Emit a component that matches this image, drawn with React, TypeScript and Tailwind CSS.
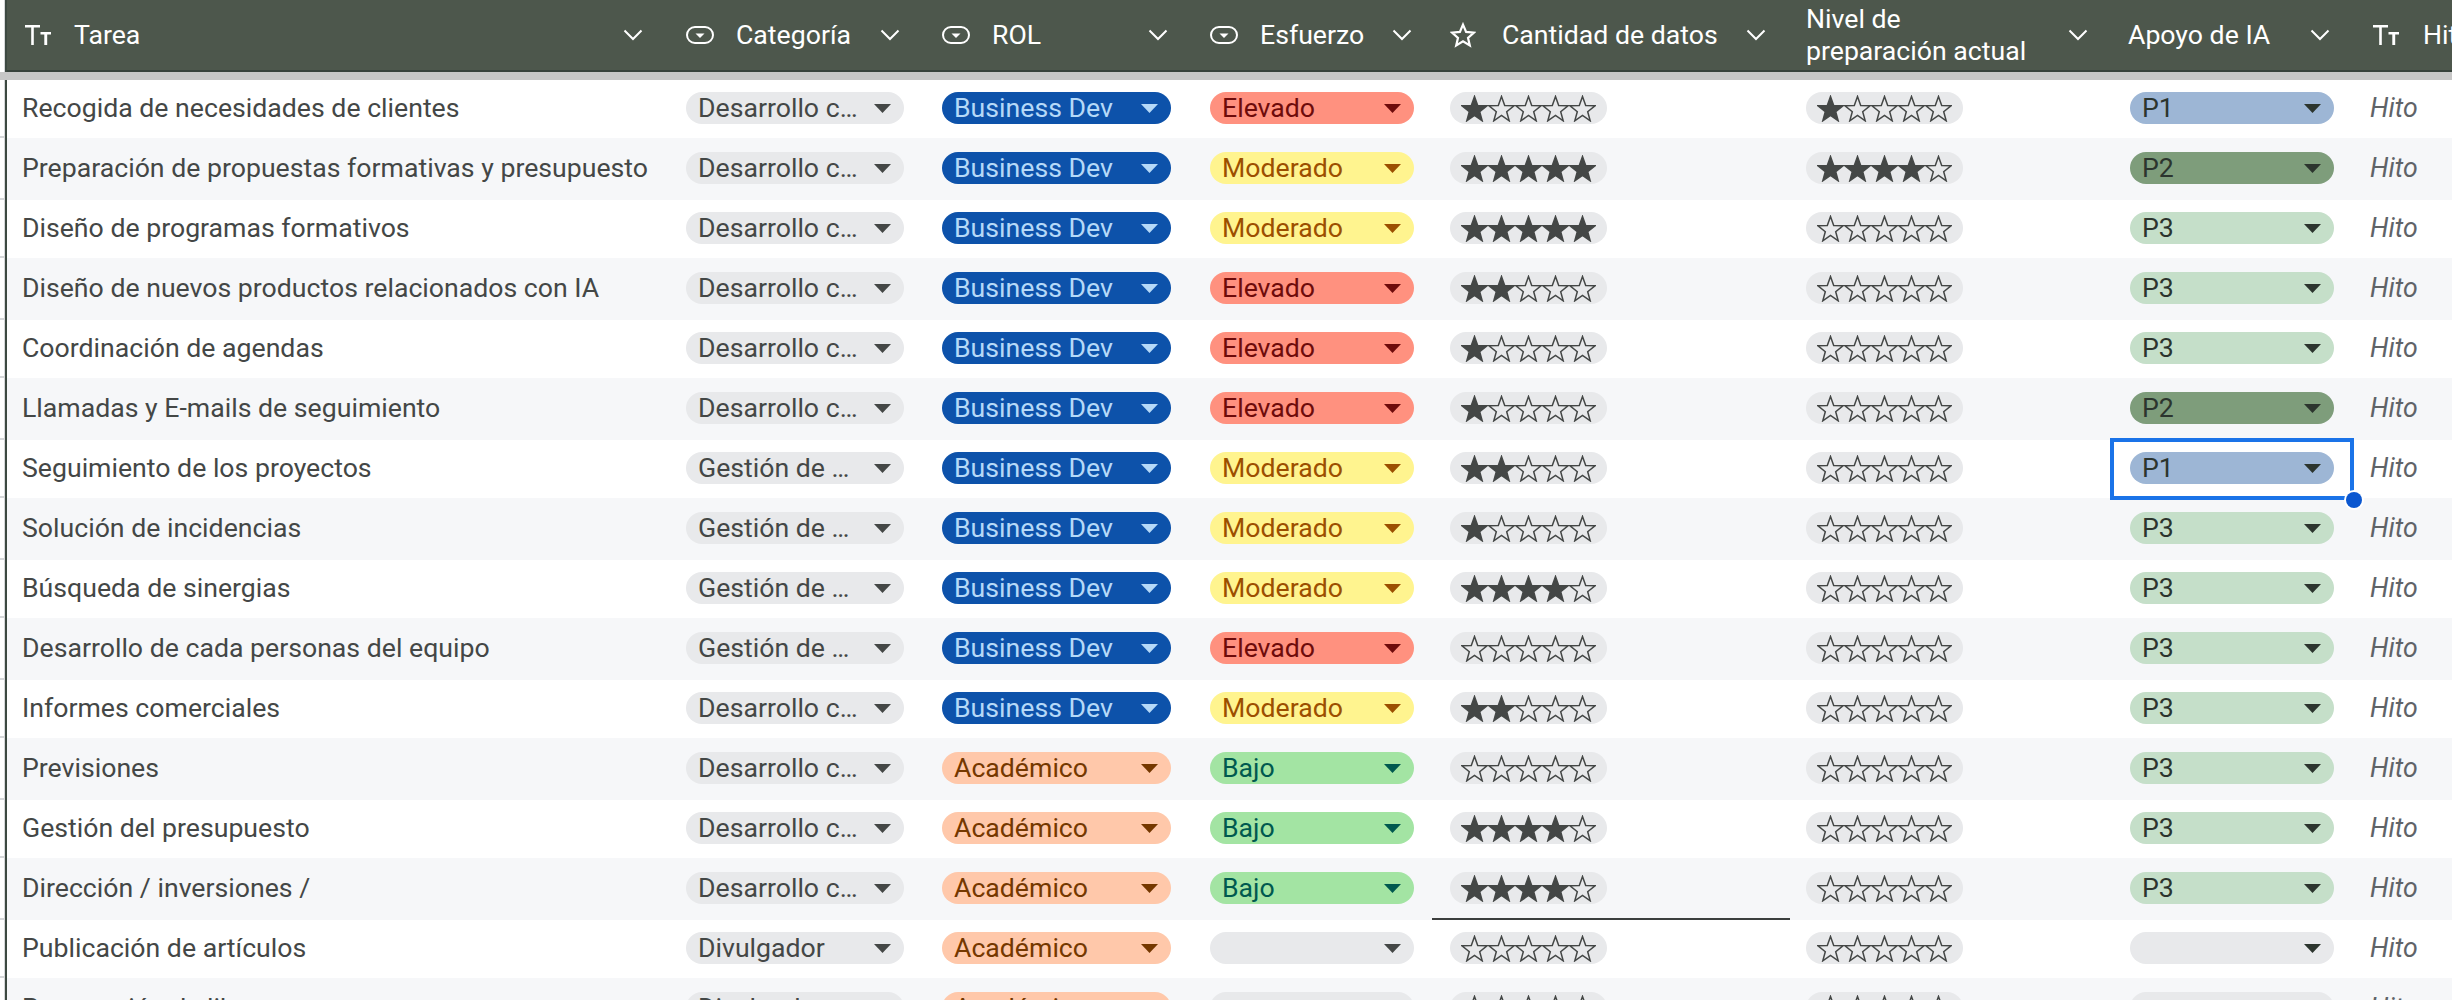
import React from 'react';

type Chip = 'elevado' | 'moderado' | 'bajo' | 'vacio';
type Apoyo = 'P1' | 'P2' | 'P3' | '';

type Fila = {
  tarea: string;
  categoria: string;
  rol: 'Business Dev' | 'Académico';
  esfuerzo: Chip;
  datos: number;
  nivel: number;
  apoyo: Apoyo;
};

const D = 'Desarrollo comercial';
const G = 'Gestión de equipos';
const BD = 'Business Dev' as const;
const AC = 'Académico' as const;

const filas: Fila[] = [
  { tarea: 'Recogida de necesidades de clientes', categoria: D, rol: BD, esfuerzo: 'elevado', datos: 1, nivel: 1, apoyo: 'P1' },
  { tarea: 'Preparación de propuestas formativas y presupuesto', categoria: D, rol: BD, esfuerzo: 'moderado', datos: 5, nivel: 4, apoyo: 'P2' },
  { tarea: 'Diseño de programas formativos', categoria: D, rol: BD, esfuerzo: 'moderado', datos: 5, nivel: 0, apoyo: 'P3' },
  { tarea: 'Diseño de nuevos productos relacionados con IA', categoria: D, rol: BD, esfuerzo: 'elevado', datos: 2, nivel: 0, apoyo: 'P3' },
  { tarea: 'Coordinación de agendas', categoria: D, rol: BD, esfuerzo: 'elevado', datos: 1, nivel: 0, apoyo: 'P3' },
  { tarea: 'Llamadas y E-mails de seguimiento', categoria: D, rol: BD, esfuerzo: 'elevado', datos: 1, nivel: 0, apoyo: 'P2' },
  { tarea: 'Seguimiento de los proyectos', categoria: G, rol: BD, esfuerzo: 'moderado', datos: 2, nivel: 0, apoyo: 'P1' },
  { tarea: 'Solución de incidencias', categoria: G, rol: BD, esfuerzo: 'moderado', datos: 1, nivel: 0, apoyo: 'P3' },
  { tarea: 'Búsqueda de sinergias', categoria: G, rol: BD, esfuerzo: 'moderado', datos: 4, nivel: 0, apoyo: 'P3' },
  { tarea: 'Desarrollo de cada personas del equipo', categoria: G, rol: BD, esfuerzo: 'elevado', datos: 0, nivel: 0, apoyo: 'P3' },
  { tarea: 'Informes comerciales', categoria: D, rol: BD, esfuerzo: 'moderado', datos: 2, nivel: 0, apoyo: 'P3' },
  { tarea: 'Previsiones', categoria: D, rol: AC, esfuerzo: 'bajo', datos: 0, nivel: 0, apoyo: 'P3' },
  { tarea: 'Gestión del presupuesto', categoria: D, rol: AC, esfuerzo: 'bajo', datos: 4, nivel: 0, apoyo: 'P3' },
  { tarea: 'Dirección / inversiones /', categoria: D, rol: AC, esfuerzo: 'bajo', datos: 4, nivel: 0, apoyo: 'P3' },
  { tarea: 'Publicación de artículos', categoria: 'Divulgador', rol: AC, esfuerzo: 'vacio', datos: 0, nivel: 0, apoyo: '' },
  { tarea: 'Preparación de libros', categoria: 'Divulgador', rol: AC, esfuerzo: 'vacio', datos: 0, nivel: 0, apoyo: '' },
];

const esfuerzoEstilo: Record<Chip, { label: string; pill: string; caret: string }> = {
  elevado: { label: 'Elevado', pill: 'bg-[#ff917f] text-[#6e0b0b]', caret: 'text-[#6e0b0b]' },
  moderado: { label: 'Moderado', pill: 'bg-[#fff48f] text-[#9c4f00]', caret: 'text-[#9c4f00]' },
  bajo: { label: 'Bajo', pill: 'bg-[#a3e4a3] text-[#00594f]', caret: 'text-[#00594f]' },
  vacio: { label: '', pill: 'bg-[#e8e9eb] text-[#444746]', caret: 'text-[#444746]' },
};

const rolEstilo = {
  'Business Dev': { pill: 'bg-[#0d52aa] text-[#b5d9f8]', caret: 'text-[#b5d9f8]' },
  'Académico': { pill: 'bg-[#ffc8aa] text-[#753800]', caret: 'text-[#753800]' },
};

const apoyoEstilo: Record<string, string> = {
  P1: 'bg-[#9db6d5]',
  P2: 'bg-[#7e9d7b]',
  P3: 'bg-[#c5dfc9]',
  '': 'bg-[#e8e9eb]',
};

const TextIcon = () => (
  <svg width="26" height="20" viewBox="0 0 26 20" className="shrink-0 text-white" fill="currentColor">
    <path d="M0 0h15v2.4H8.8V20H6.2V2.4H0z" />
    <path d="M15.5 7H26v2.6h-3.8V20h-2.9V9.6h-3.8z" />
  </svg>
);

const DropdownIcon = () => (
  <svg width="28" height="18" viewBox="0 0 28 18" className="shrink-0 text-white" fill="none">
    <rect x="1" y="1" width="26" height="16" rx="8" stroke="currentColor" strokeWidth="2" />
    <path d="M9.5 7.5h9L14 12z" fill="currentColor" />
  </svg>
);

const StarHeaderIcon = () => (
  <svg width="26" height="26" viewBox="0 0 26 26" className="shrink-0 text-white" fill="none">
    <path d="M13 2.6l3.1 7.3 7.9.7-6 5.2 1.8 7.7L13 19.4l-6.8 4.1L8 15.8l-6-5.2 7.9-.7z" stroke="currentColor" strokeWidth="2.2" strokeLinejoin="miter" />
  </svg>
);

const Chevron = () => (
  <svg width="20" height="12" viewBox="0 0 20 12" className="shrink-0 text-white" fill="none">
    <path d="M1.5 1.5L10 10l8.5-8.5" stroke="currentColor" strokeWidth="2" />
  </svg>
);

const Caret = ({ className = 'text-[#444746]' }: { className?: string }) => (
  <svg width="17" height="9" viewBox="0 0 17 9" className={`shrink-0 ${className}`} fill="currentColor">
    <path d="M0 0h17l-8.5 9z" />
  </svg>
);

const Star = ({ on }: { on: boolean }) => (
  <svg width="27" height="27" viewBox="0 0 27 27" className="shrink-0">
    <path
      d="M13.5 1.5l3.2 8.9 9.3.4-7.3 5.9 2.5 9.1-7.7-5.3-7.7 5.3 2.5-9.1L1 10.8l9.3-.4z"
      fill={on ? '#444746' : 'none'}
      stroke="#444746"
      strokeWidth="1.5"
    />
  </svg>
);

const Stars = ({ n }: { n: number }) => (
  <div className="flex h-8 w-[157px] items-center rounded-full bg-[#e8e9eb] pl-[11px]">
    {[1, 2, 3, 4, 5].map((i) => (
      <Star key={i} on={i <= n} />
    ))}
  </div>
);

const Pill = ({ label, width, pill, caret }: { label: string; width: string; pill: string; caret?: string }) => (
  <div className={`flex h-8 items-center justify-between rounded-full pl-[12px] pr-[13px] ${width} ${pill}`}>
    <span className="min-w-0 flex-1 truncate pr-[14px] leading-8">{label}</span>
    <Caret className={caret} />
  </div>
);

const Gutter = ({ tick = true }: { tick?: boolean }) => (
  <div className="w-[7px] shrink-0 border-r-2 border-[#3d4941] bg-white">
    <div className={`h-full w-[5px] border-r border-[#d5d7d9] ${tick ? 'border-b-2 border-b-[#d5d7d9]' : ''}`} />
  </div>
);

const HeaderCell = ({ icon, children, width, pl, pr }: { icon?: React.ReactNode; children: React.ReactNode; width: string; pl: string; pr: string }) => (
  <div className={`flex shrink-0 items-center ${width} ${pl} ${pr}`}>
    {icon}
    <div className="min-w-0 flex-1 whitespace-pre-line leading-[32px]">{children}</div>
    <Chevron />
  </div>
);

const Header = () => (
  <div className="flex h-[72px] shrink-0">
    <Gutter tick={false} />
    <div className="flex min-w-0 flex-1 border-b-2 border-[#38433c] bg-[#4d574c] text-white">
      <HeaderCell icon={<TextIcon />} width="w-[661px]" pl="pl-[18px] gap-[23px]" pr="pr-[25px]">Tarea</HeaderCell>
      <HeaderCell icon={<DropdownIcon />} width="w-[256px]" pl="pl-[18px] gap-[22px]" pr="pr-[24px]">Categoría</HeaderCell>
      <HeaderCell icon={<DropdownIcon />} width="w-[268px]" pl="pl-[18px] gap-[22px]" pr="pr-[24px]">ROL</HeaderCell>
      <HeaderCell icon={<DropdownIcon />} width="w-[240px]" pl="pl-[18px] gap-[22px]" pr="pr-[20px]">Esfuerzo</HeaderCell>
      <HeaderCell icon={<StarHeaderIcon />} width="w-[358px]" pl="pl-[18px] gap-[26px]" pr="pr-[24px]">Cantidad de datos</HeaderCell>
      <HeaderCell width="w-[320px]" pl="pl-[16px]" pr="pr-[22px]">{'Nivel de\npreparación actual'}</HeaderCell>
      <HeaderCell width="w-[244px]" pl="pl-[18px]" pr="pr-[24px]">Apoyo de IA</HeaderCell>
      <div className="flex shrink-0 items-center gap-[24px] pl-[19px]">
        <TextIcon />
        <span>Hito</span>
      </div>
    </div>
  </div>
);

const Row = ({ fila, index }: { fila: Fila; index: number }) => {
  const par = index % 2 === 1;
  const rol = rolEstilo[fila.rol];
  const esfuerzo = esfuerzoEstilo[fila.esfuerzo];
  return (
    <div className={`flex shrink-0 ${par ? 'h-[62px]' : 'h-[58px]'}`}>
      <Gutter />
      <div className={`flex min-w-0 flex-1 items-start text-[#444746] ${par ? 'bg-[#f6f7f9] pt-[14px]' : 'bg-white pt-[12px]'}`}>
        <div className="w-[661px] shrink-0 truncate pl-[15px] leading-8">{fila.tarea}</div>
        <div className="w-[256px] shrink-0 pl-[18px]">
          <Pill label={fila.categoria} width="w-[218px]" pill="bg-[#e8e9eb]" />
        </div>
        <div className="w-[268px] shrink-0 pl-[18px]">
          <Pill label={fila.rol} width="w-[229px]" pill={rol.pill} caret={rol.caret} />
        </div>
        <div className="w-[240px] shrink-0 pl-[18px]">
          <Pill label={esfuerzo.label} width="w-[204px]" pill={esfuerzo.pill} caret={esfuerzo.caret} />
        </div>
        <div className="relative w-[358px] shrink-0 pl-[18px]">
          <Stars n={fila.datos} />
          {index === 13 && <div className="absolute inset-x-0 bottom-[-16px] h-[2px] bg-[#3c3f3e]" />}
        </div>
        <div className="w-[320px] shrink-0 pl-[16px]">
          <Stars n={fila.nivel} />
        </div>
        <div className="relative w-[244px] shrink-0 pl-[20px]">
          <Pill label={fila.apoyo} width="w-[204px]" pill={`${apoyoEstilo[fila.apoyo]} text-[#2c352e]`} caret="text-[#2c352e]" />
          {index === 6 && (
            <>
              <div className="absolute inset-x-0 top-[-14px] h-[62px] border-4 border-[#1a73e8]" />
              <div className="absolute right-[-8px] top-[40px] h-4 w-4 rounded-full bg-[#0b57d0] ring-2 ring-white" />
            </>
          )}
        </div>
        <div className="shrink-0 pl-[16px] italic leading-8 text-[#5f6368]">Hito</div>
      </div>
    </div>
  );
};

const App: React.FC = () => {
  return (
    <div className="flex h-[1000px] w-[2452px] flex-col overflow-hidden bg-white font-['Roboto',sans-serif] text-[26.67px]">
      <Header />
      <div className="h-2 shrink-0 bg-[#c7c7c7]" />
      {filas.map((fila, i) => (
        <Row key={i} fila={fila} index={i} />
      ))}
    </div>
  );
};

export default App;
